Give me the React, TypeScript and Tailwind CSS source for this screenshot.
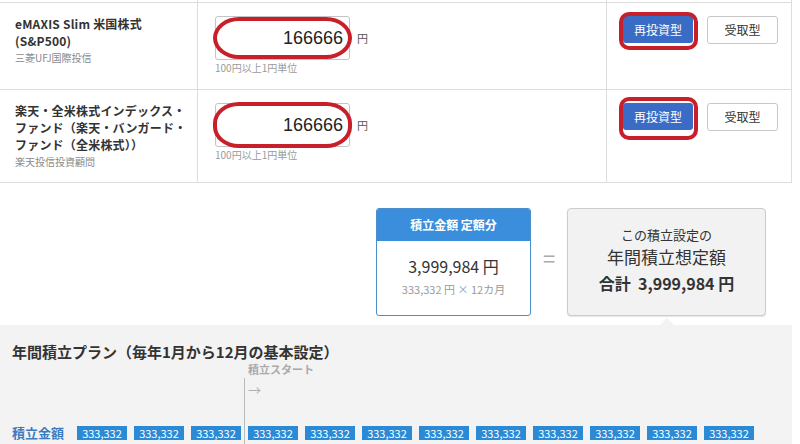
/* Fund accumulation settings - rows, yearly total, and plan timeline */

const JP = "font-['Noto_Sans_CJK_JP','Noto_Sans',sans-serif]";

interface FundRowProps {
    lines: string[];
    sub: string;
    rowH: string;
    ovalTop: string;
    ovalH: string;
    ringTop: string;
    ringH: string;
}

function FundRow({ lines, sub, rowH, ovalTop, ovalH, ringTop, ringH }: FundRowProps) {
    return (
        <div className={`grid grid-cols-[198px_409px_185px] border-b border-[#dddddd] ${rowH}`}>
            <div className="border-r border-[#dddddd] pl-[15px] pt-[12px]">
                {lines.map((l) => (
                    <div key={l} className="text-[12px] leading-[17px] font-bold text-[#333333] tracking-[0.2px]">{l}</div>
                ))}
                <div className="text-[10px] leading-[17px] text-[#8a8a8a]">{sub}</div>
            </div>

            <div className="relative border-r border-[#dddddd] pl-[17px] pt-[13px]">
                <div className="flex items-center">
                    <div className="w-[135px] h-[44px] border border-[#c4c4c4] rounded-[3px] bg-white text-right pr-[6px] text-[18px] leading-[42px] text-[#222222] font-['Liberation_Sans',Arial,sans-serif]">
                        166666
                    </div>
                    <span className="ml-[7px] text-[11px] text-[#555555]">円</span>
                </div>
                <div className="mt-[1px] text-[10px] leading-[14px] text-[#9a9a9a]">100円以上1円単位</div>
                {/* red annotation oval */}
                <div className={`absolute left-[15px] w-[139px] border-[4px] border-[#c8202b] rounded-[26px/21px] ${ovalTop} ${ovalH}`} />
            </div>

            <div className="relative pl-[16px] pt-[13px]">
                <div className="flex items-start">
                    <div className="w-[70px] h-[27px] bg-[#3b6cc5] rounded-[3px] text-white text-[12px] leading-[27px] text-center">再投資型</div>
                    <div className="ml-[14px] w-[71px] h-[28px] border border-[#c8c8c8] rounded-[3px] bg-white text-[12px] leading-[26px] text-center text-[#333333]">受取型</div>
                </div>
                {/* red annotation ring */}
                <div className={`absolute left-[12px] w-[79px] border-[4px] border-[#c8202b] rounded-[10px] ${ringTop} ${ringH}`} />
            </div>
        </div>
    );
}

export default function App() {
    const months = Array.from({ length: 12 }, (_, i) => i);

    return (
        <div className={`w-[800px] h-[444px] overflow-hidden bg-white ${JP}`}>
            {/* fund table */}
            <div className="w-[792px] border-r border-[#dddddd]">
                <div className="grid grid-cols-[198px_409px_185px] h-[3px] border-b border-[#dddddd]">
                    <div className="border-r border-[#dddddd]" />
                    <div className="border-r border-[#dddddd]" />
                    <div />
                </div>
                <FundRow
                    lines={['eMAXIS Slim 米国株式', '(S&P500)']}
                    sub="三菱UFJ国際投信"
                    rowH="h-[87px]"
                    ovalTop="top-[14px]"
                    ovalH="h-[42px]"
                    ringTop="top-[9px]"
                    ringH="h-[38px]"
                />
                <FundRow
                    lines={['楽天・全米株式インデックス・', 'ファンド（楽天・バンガード・', 'ファンド（全米株式））']}
                    sub="楽天投信投資顧問"
                    rowH="h-[93px]"
                    ovalTop="top-[12px]"
                    ovalH="h-[46px]"
                    ringTop="top-[7px]"
                    ringH="h-[43px]"
                />
            </div>

            {/* summary */}
            <div className="h-[142px] flex items-start pl-[376px] pt-[25px]">
                <div className="w-[155px] h-[108px] border border-[#4a8fc9] rounded-[3px] overflow-hidden bg-white">
                    <div className="h-[32px] bg-[#3a8edb] text-white text-[12px] font-bold leading-[32px] text-center">積立金額 定額分</div>
                    <div className="pt-[14px] text-center text-[16px] leading-[22px] text-[#333333]">3,999,984 円</div>
                    <div className="mt-[4px] text-center text-[11px] leading-[16px] text-[#9a9a9a]">333,332 円 × 12カ月</div>
                </div>
                <div className="w-[36px] pt-[38px] text-center text-[22px] leading-[22px] text-[#aaaaaa]">=</div>
                <div className="w-[199px] h-[108px] bg-[#f2f2f2] border border-[#cccccc] rounded-[4px] shadow-[0_1px_1px_rgba(0,0,0,0.1)] text-center text-[#333333]">
                    <div className="pt-[16px] text-[13px] leading-[20px]">この積立設定の</div>
                    <div className="text-[17px] leading-[24px]">年間積立想定額</div>
                    <div className="mt-[2px] text-[16px] leading-[24px] font-bold">合計&nbsp;&nbsp;3,999,984 円</div>
                </div>
            </div>

            {/* yearly plan panel */}
            <div className="relative w-[792px] h-[130px] bg-[#f3f3f3] pl-[12px] pt-[17px]">
                <div className="absolute -top-[7px] left-[660px] w-0 h-0 border-l-[7px] border-r-[7px] border-b-[7px] border-l-transparent border-r-transparent border-b-[#f3f3f3]" />
                <div className="absolute left-[244px] top-[53px] bottom-0 w-px bg-[#bbbbbb]" />
                <div className="text-[15px] leading-[20px] font-bold text-[#333333]">年間積立プラン（毎年1月から12月の基本設定）</div>
                <div className="ml-[236px] text-[11px] leading-[14px] font-bold text-[#aaaaaa]">積立スタート</div>
                <div className="ml-[236px] h-[28px] text-[13px] leading-[28px] text-[#b0b0b0]">→</div>
                <div className="mt-[21px] flex items-center h-[16px]">
                    <div className="w-[65px] text-[13px] leading-[16px] font-bold text-[#3d7bc0]">積立金額</div>
                    <div className="flex gap-[7px]">
                        {months.map((m) => (
                            <div key={m} className="w-[50px] h-[14px] bg-[#2b8ad6] text-white text-[11px] leading-[14px] text-center">333,332</div>
                        ))}
                    </div>
                </div>
            </div>
        </div>
    );
}
